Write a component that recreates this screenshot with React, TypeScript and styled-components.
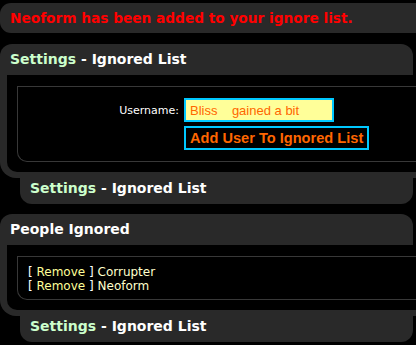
import React from "react";
import styled, { createGlobalStyle } from "styled-components";

const GlobalStyle = createGlobalStyle`
  html, body {
    margin: 0;
    padding: 0;
    background: #000;
    overflow: hidden;
  }
  body {
    font-family: "DejaVu Sans", Verdana, sans-serif;
  }
`;

const Page = styled.div`
  width: 416px;
  padding-top: 3px;
  overflow: hidden;
`;

const ErrorBox = styled.div`
  height: 30px;
  line-height: 30px;
  padding-left: 10px;
  background: #292929;
  border-radius: 11px 0 0 11px;
  color: #ff0000;
  font-size: 13.7px;
  font-weight: bold;
  white-space: nowrap;
  margin-bottom: 11px;
`;

const Panel = styled.section`
  display: flex;
  flex-direction: column;
  margin-bottom: 10px;
`;

const PanelHeader = styled.div`
  height: 31px;
  line-height: 31px;
  margin-right: 3px;
  padding-left: 10px;
  background: #292929;
  border-radius: 12px 12px 0 0;
  color: #fff;
  font-size: 14px;
  font-weight: bold;
  white-space: nowrap;
`;

const Crumb = styled.span`
  color: #ccffcc;
`;

const PanelBody = styled.div`
  background: #292929;
  padding: 0 0 6px 7px;
  border-bottom-left-radius: 16px;
`;

const BodyInner = styled.div`
  background: #000;
  padding: 11px 0 10px 10px;
  border-bottom-left-radius: 10px;
`;

const InnerBox = styled.div<{ $pad: string }>`
  border: 1px solid #383838;
  border-right: none;
  border-bottom-left-radius: 10px;
  padding: ${(p) => p.$pad};
`;

const PanelFooter = styled.div`
  position: relative;
  height: 32px;
  line-height: 32px;
  margin: -6px 3px 0 20px;
  padding-left: 10px;
  background: #292929;
  border-radius: 0 0 12px 12px;
  color: #fff;
  font-size: 14px;
  font-weight: bold;
  white-space: nowrap;
`;

const FormGrid = styled.div`
  display: grid;
  grid-template-columns: 161px auto;
  column-gap: 5px;
  row-gap: 4px;
  align-items: center;
  justify-content: start;
`;

const Label = styled.label`
  color: #fff;
  font-size: 11px;
  text-align: right;
`;

const NameInput = styled.input`
  box-sizing: border-box;
  width: 150px;
  height: 24px;
  border: 2px solid #00c8ff;
  background: #ffff99;
  color: #ff6600;
  font-family: "Liberation Sans", Arial, sans-serif;
  font-size: 13px;
  padding: 0 4px;
  outline: none;
`;

const AddButton = styled.button`
  grid-column: 2;
  justify-self: start;
  box-sizing: border-box;
  height: 24px;
  padding: 0 4px;
  border: 2px solid #00c8ff;
  background: #000;
  color: #ff6600;
  font-family: "Liberation Sans", Arial, sans-serif;
  font-size: 14.6px;
  font-weight: bold;
  white-space: nowrap;
`;

const List = styled.div`
  font-size: 12px;
  line-height: 14px;
  color: #fff;
`;

const RemoveLink = styled.a`
  color: #ffff99;
  text-decoration: none;
`;

const Name = styled.span`
  color: #ffffcc;
`;

const ignored = ["Corrupter", "Neoform"];

const Footer = () => (
  <PanelFooter>
    <Crumb>Settings</Crumb> - Ignored List
  </PanelFooter>
);

export default function App() {
  return (
    <Page>
      <GlobalStyle />
      <ErrorBox>Neoform has been added to your ignore list.</ErrorBox>

      <Panel>
        <PanelHeader>
          <Crumb>Settings</Crumb> - Ignored List
        </PanelHeader>
        <PanelBody>
          <BodyInner>
            <InnerBox $pad="11px 0">
              <FormGrid>
                <Label htmlFor="uname">Username:</Label>
                <NameInput id="uname" readOnly value="Bliss    gained a bit" />
                <AddButton type="button">Add User To Ignored List</AddButton>
              </FormGrid>
            </InnerBox>
          </BodyInner>
        </PanelBody>
        <Footer />
      </Panel>

      <Panel>
        <PanelHeader>People Ignored</PanelHeader>
        <PanelBody>
          <BodyInner>
            <InnerBox $pad="8px 10px 6px">
              <List>
                {ignored.map((n) => (
                  <div key={n}>
                    [ <RemoveLink href="#">Remove</RemoveLink> ] <Name>{n}</Name>
                  </div>
                ))}
              </List>
            </InnerBox>
          </BodyInner>
        </PanelBody>
        <Footer />
      </Panel>
    </Page>
  );
}
